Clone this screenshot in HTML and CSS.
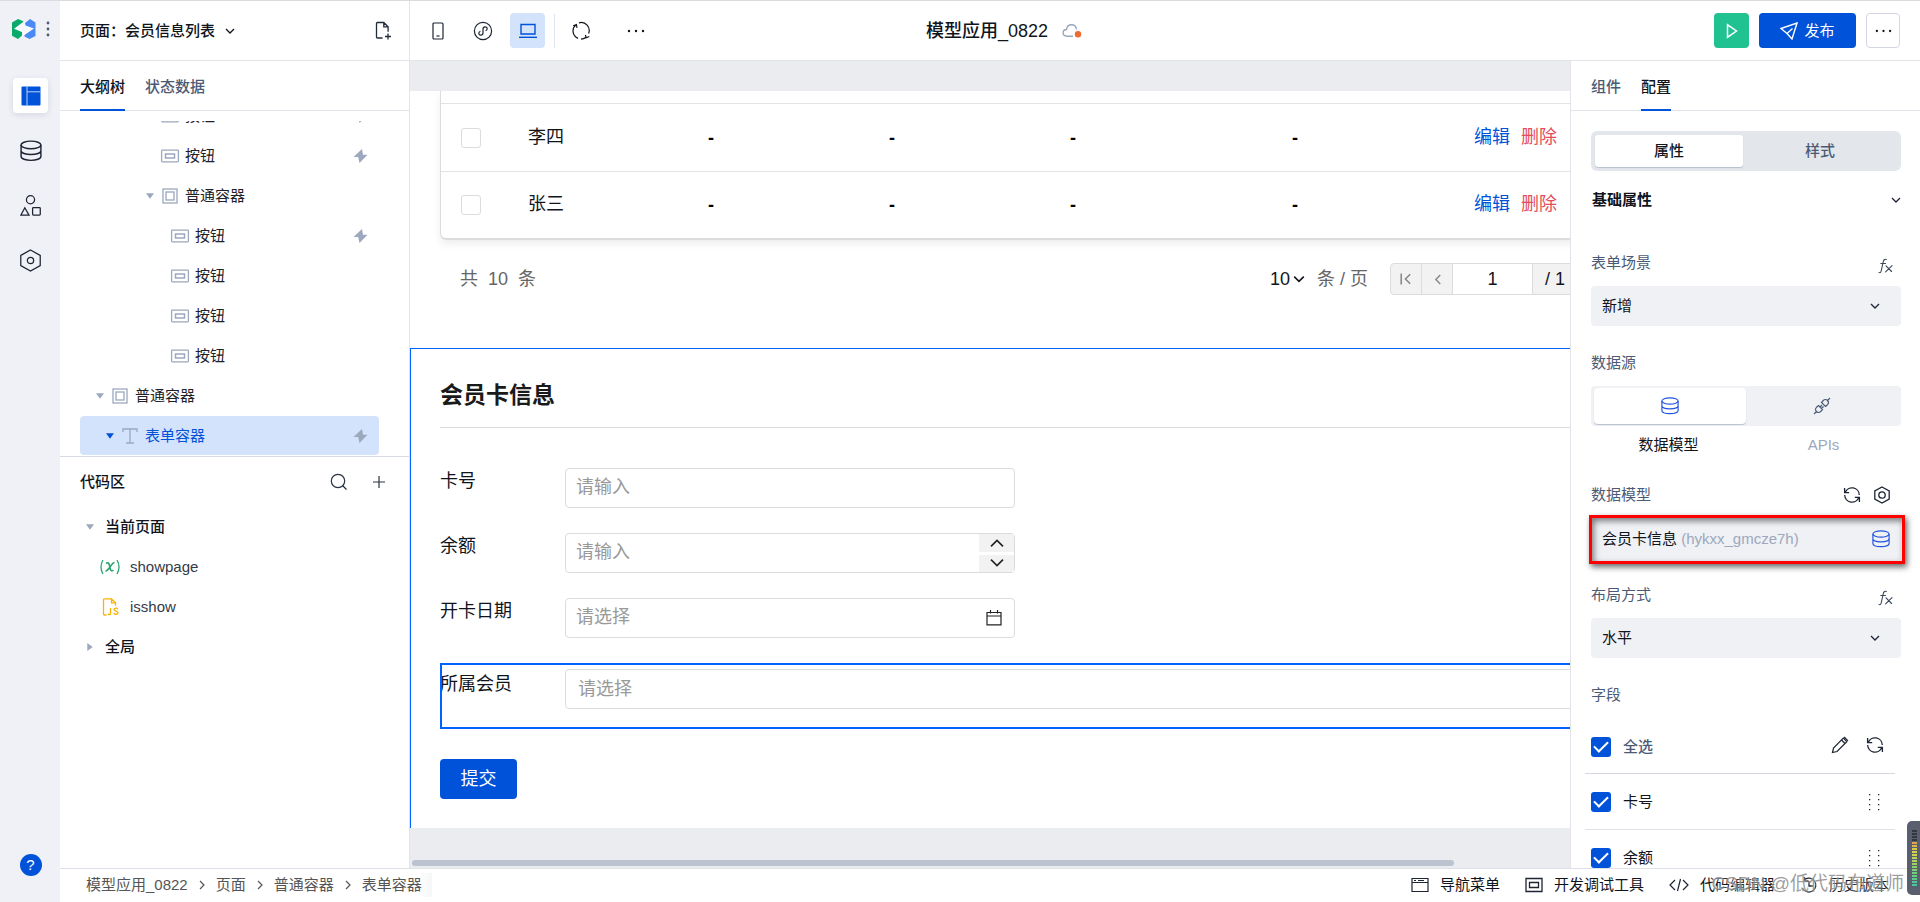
FILE: index.html
```html
<!DOCTYPE html>
<html lang="zh-CN">
<head>
<meta charset="utf-8">
<title>模型应用_0822</title>
<link rel="stylesheet" href="styles.css">
</head>
<body>
<svg class="sprite" aria-hidden="true">
  <symbol id="i-down" viewBox="0 0 10 10"><path d="M1 3l4 4 4-4" fill="none" stroke="currentColor" stroke-width="1.3"/></symbol>
  <symbol id="i-up" viewBox="0 0 10 10"><path d="M1 7l4-4 4 4" fill="none" stroke="currentColor" stroke-width="1.3"/></symbol>
  <symbol id="i-step-up" viewBox="0 0 12 12"><path d="M1.500 8.500L6 4l4.500 4.500" fill="none" stroke="currentColor" stroke-width="1.200"/></symbol>
  <symbol id="i-step-down" viewBox="0 0 12 12"><path d="M1.500 3.500L6 8l4.500-4.500" fill="none" stroke="currentColor" stroke-width="1.200"/></symbol>
  <symbol id="i-left" viewBox="0 0 10 10"><path d="M7.500 1l-4 4 4 4" fill="none" stroke="currentColor" stroke-width="1.300"/></symbol>
  <symbol id="i-right" viewBox="0 0 10 10"><path d="M3 1l4 4-4 4" fill="none" stroke="currentColor" stroke-width="1.200"/></symbol>
  <symbol id="i-first" viewBox="0 0 10 10"><path d="M1 0.500v9M8.500 1l-4 4 4 4" fill="none" stroke="currentColor" stroke-width="1.300"/></symbol>
  <symbol id="i-db" viewBox="0 0 20 20"><g fill="none" stroke="currentColor" stroke-width="1.300"><ellipse cx="10" cy="4.500" rx="9" ry="3.500"/><path d="M1 4.500v10.500c0 2 4 3.500 9 3.500s9-1.500 9-3.500V4.500M1 9.800c0 2 4 3.400 9 3.400s9-1.400 9-3.400"/></g></symbol>
  <symbol id="i-shapes" viewBox="0 0 20 20"><g fill="none" stroke="currentColor" stroke-width="1.200"><circle cx="10" cy="4.500" r="3.900"/><path d="M4.600 12.200l4 7H.800z"/><rect x="12" y="12" width="7.300" height="7.200" rx=".8"/></g></symbol>
  <symbol id="i-hex" viewBox="0 0 22 22"><g fill="none" stroke="currentColor" stroke-width="1.200"><path d="M11 1l9.300 5.200v9.600L11 21l-9.300-5.200V6.200z"/><circle cx="11" cy="11" r="3"/></g></symbol>
  <symbol id="i-nut" viewBox="0 0 18 18"><g fill="none" stroke="currentColor" stroke-width="1.300"><path d="M9 1l7.200 4v8L9 17l-7.200-4V5z"/><circle cx="9" cy="9" r="3.200"/></g></symbol>
  <symbol id="i-btn" viewBox="0 0 20 14"><g fill="none" stroke="currentColor"><rect x="1.600" y="1.100" width="16.800" height="11.800" rx=".8" stroke-width="1.300"/><rect x="5.500" y="5" width="9" height="4" stroke-width="1.500"/></g></symbol>
  <symbol id="i-box" viewBox="0 0 16 16"><g fill="none" stroke="currentColor" stroke-width="1.300"><rect x="1" y="1" width="14" height="14"/><rect x="4" y="4" width="8" height="8"/></g></symbol>
  <symbol id="i-t" viewBox="0 0 16 16"><path d="M1 4V1h14v3M8 1v14M4 15h8" fill="none" stroke="currentColor" stroke-width="1.300"/></symbol>
  <symbol id="i-bolt" viewBox="0 0 14 14"><path d="M8.500 0L0 8h4.700L6 14l8-8.300H9.500z" fill="currentColor"/></symbol>
  <symbol id="i-tri" viewBox="0 0 8 6"><path d="M0 .3h8L4 5.700z" fill="currentColor"/></symbol>
  <symbol id="i-trir" viewBox="0 0 6 8"><path d="M.3 0v8l5.400-4z" fill="currentColor"/></symbol>
  <symbol id="i-refresh" viewBox="0 0 18 18"><g fill="none" stroke="currentColor" stroke-width="1.300"><path d="M2.200 6.500A7.300 7.300 0 0 1 16.300 9M15.800 11.500A7.300 7.300 0 0 1 1.700 9M1.600 2v4.700h4.600M16.400 16v-4.700h-4.600"/></g></symbol>
  <symbol id="i-sync" viewBox="0 0 20 20"><g fill="none" stroke="currentColor" stroke-width="1.200"><path d="M5 3.800A8 8 0 0 0 7 17.400M8 1.800A8 8 0 0 1 17.600 12.500M15 16.200A8 8 0 0 1 10 18.100M2.200 4.700L5.400 3.500 6 6.800M14.300 14l1 2.800 3-1.300"/></g></symbol>
  <symbol id="i-more" viewBox="0 0 18 4"><g fill="currentColor"><circle cx="2" cy="2" r="1.200"/><circle cx="9" cy="2" r="1.200"/><circle cx="16" cy="2" r="1.200"/></g></symbol>
  <symbol id="i-fx" viewBox="0 0 16 16"><g fill="none" stroke="currentColor" stroke-width="1.100" stroke-linecap="round"><path d="M8.300 1.500C6.500.8 5.600 2 5.200 4L3.300 12.500C3 14.300 2.200 15 1 14.600M2.800 5.500h4.700M8 7.800l5.600 5.700M14 7.600l-6.400 6.200"/></g></symbol>
  <symbol id="i-grip" viewBox="0 0 12 18"><g fill="currentColor"><path d="M1 1h1.300v1.300H1zM1 6h1.300v1.300H1zM1 11h1.300v1.300H1zM1 16h1.300v1.300H1zM10 1h1.300v1.300H10zM10 6h1.300v1.300H10zM10 11h1.300v1.300H10zM10 16h1.300v1.300H10z"/></g></symbol>
</svg>

<nav class="rail" aria-label="主导航">
  <div class="brand">
    <svg width="24" height="20" viewBox="0 0 24 20"><path d="M0 3.500L6 0l5.300 2.200V6L4.500 9.500l5.500 2.500v4.500L6 20 0 16.800z" fill="#0aaa6c"/><path d="M18 0l5.500 3.500V17L17.500 20l-5-2.500V14l6-3.500-6-2.300V4.500z" fill="#4a8af4"/><path d="M12.500 2L2 9.800l9 3.700v3.500l11-7.500-8.500-3z" fill="#f7f9fc"/><path d="M11.300 2.200L4.500 7.500 2 9.500 0 9V3.500L6 0zM12.500 17.500l6.500-5 3.500-2.700 1 .2v7L17.500 20z" fill="none"/></svg>
    <svg width="4" height="16" viewBox="0 0 4 16"><g fill="#4b5b76"><circle cx="2" cy="2" r="1.400"/><circle cx="2" cy="8" r="1.400"/><circle cx="2" cy="14" r="1.400"/></g></svg>
  </div>
  <button class="rail-btn active" aria-label="页面"><svg width="20" height="20" viewBox="0 0 20 20"><rect x=".5" y=".5" width="19" height="19" rx="1" fill="#0052d9"/><path d="M6 .5v19M6 5.800h13.500" stroke="#b9d0f8" stroke-width="1"/></svg></button>
  <button class="rail-btn" aria-label="数据"><svg width="22" height="22"><use href="#i-db"/></svg></button>
  <button class="rail-btn" aria-label="组件"><svg width="21" height="21"><use href="#i-shapes"/></svg></button>
  <button class="rail-btn" aria-label="设置"><svg width="23" height="23"><use href="#i-hex"/></svg></button>
  <button class="help" aria-label="帮助">?</button>
</nav>

<div class="shell">
  <header class="header">
    <div class="header-left">
      <div class="page-pick">
        <button class="plain strong">页面：会员信息列表 <svg class="pick-arrow" width="10" height="10"><use href="#i-down"/></svg></button>
        <button class="plain" aria-label="新建页面"><svg width="18" height="20" viewBox="0 0 18 20"><g fill="none" stroke="#222b3a" stroke-width="1.300"><path d="M7.500 17H2.500a1 1 0 0 1-1-1V2.500a1 1 0 0 1 1-1h6.300l4.300 4.300v5M8.800 1.500v4.300h4.300M13 12.500v6M10 15.500h6"/></g></svg></button>
      </div>
      <div class="devices">
        <button class="tool" aria-label="手机"><svg width="14" height="18" viewBox="0 0 14 18"><rect x="2" y="1" width="10" height="16" rx="1" fill="none" stroke="#1d2433" stroke-width="1.200"/><path d="M5.500 14h3" stroke="#1d2433" stroke-width="1.200"/></svg></button>
        <button class="tool" aria-label="小程序"><svg width="20" height="20" viewBox="0 0 20 20"><g fill="none" stroke="#1d2433" stroke-width="1.200"><circle cx="10" cy="10" r="8.600"/><path d="M12.600 9.800c2.400-1 2-4-.4-4-1.400 0-2.200.9-2.200 2.200v4c0 1.300-.8 2.200-2.200 2.200-2.400 0-2.800-3-.4-4"/></g></svg></button>
        <button class="tool active" aria-label="电脑"><svg width="18" height="16" viewBox="0 0 18 16"><path d="M2 1.500h14v9.500H2z" fill="none" stroke="#0052d9" stroke-width="1.400"/><path d="M0 14.300h18" stroke="#0052d9" stroke-width="1.400"/></svg></button>
        <span class="tool-sep"></span>
        <button class="tool" aria-label="同步"><svg width="20" height="20"><use href="#i-sync"/></svg></button>
        <button class="tool more-tool" aria-label="更多"><svg width="18" height="4"><use href="#i-more"/></svg></button>
      </div>
    </div>
    <h1 class="app-title">模型应用_0822
      <svg width="20" height="16" viewBox="0 0 20 16"><path d="M11 13.300H5C-.5 13 .3 6.500 4.500 6.500 5.500 0 13.800.3 14.500 6.500" fill="none" stroke="#9aa6ba" stroke-width="1.400"/><circle cx="16" cy="11.300" r="3.200" fill="#ec6b2d"/></svg>
    </h1>
    <div class="header-right">
      <button class="run" aria-label="预览"><svg width="12" height="16" viewBox="0 0 12 16"><path d="M1.500 1.800v12.400l9-6.200z" fill="none" stroke="#fff" stroke-width="1.500"/></svg></button>
      <button class="publish"><svg width="18" height="18" viewBox="0 0 18 18"><path d="M1 6.500L17 1l-5 16-5-5.500zM7 11.500l5.500-5" fill="none" stroke="#fff" stroke-width="1.400"/></svg>发布</button>
      <button class="more" aria-label="更多"><svg width="17" height="4"><use href="#i-more"/></svg></button>
    </div>
  </header>

  <div class="middle">
    <aside class="outline">
      <div class="tabs"><button class="tab current">大纲树</button><button class="tab">状态数据</button></div>
      <div class="tree">
        <ul class="tree-list">
          <li class="node lv6"><span class="caret"></span><svg class="ico" width="20" height="14"><use href="#i-btn"/></svg>按钮<svg class="bolt" width="15" height="14"><use href="#i-bolt"/></svg></li>
          <li class="node lv6"><span class="caret"></span><svg class="ico" width="20" height="14"><use href="#i-btn"/></svg>按钮<svg class="bolt" width="15" height="14"><use href="#i-bolt"/></svg></li>
          <li class="node lv6"><span class="caret"><svg width="8" height="6"><use href="#i-tri"/></svg></span><svg class="ico" width="20" height="16"><use href="#i-box"/></svg>普通容器</li>
          <li class="node lv7"><span class="caret"></span><svg class="ico" width="20" height="14"><use href="#i-btn"/></svg>按钮<svg class="bolt" width="15" height="14"><use href="#i-bolt"/></svg></li>
          <li class="node lv7"><span class="caret"></span><svg class="ico" width="20" height="14"><use href="#i-btn"/></svg>按钮</li>
          <li class="node lv7"><span class="caret"></span><svg class="ico" width="20" height="14"><use href="#i-btn"/></svg>按钮</li>
          <li class="node lv7"><span class="caret"></span><svg class="ico" width="20" height="14"><use href="#i-btn"/></svg>按钮</li>
          <li class="node lv1"><span class="caret"><svg width="8" height="6"><use href="#i-tri"/></svg></span><svg class="ico" width="20" height="16"><use href="#i-box"/></svg>普通容器</li>
          <li class="node lv2 selected"><span class="caret"><svg width="8" height="6"><use href="#i-tri"/></svg></span><svg class="ico" width="20" height="16"><use href="#i-t"/></svg>表单容器<svg class="bolt" width="15" height="14"><use href="#i-bolt"/></svg></li>
        </ul>
      </div>
      <section class="code">
        <div class="code-head"><h2>代码区</h2>
          <button class="plain" aria-label="搜索"><svg width="18" height="18" viewBox="0 0 18 18"><g fill="none" stroke="#2a3242" stroke-width="1.200"><circle cx="8" cy="8" r="6.700"/><path d="M12.500 12.500l4 4"/></g></svg></button>
          <button class="plain" aria-label="新增"><svg width="12" height="12" viewBox="0 0 12 12"><path d="M6 0v12M0 6h12" stroke="#2a3242" stroke-width="1.200"/></svg></button>
        </div>
        <ul class="code-list">
          <li class="group"><span class="caret"><svg width="8" height="6"><use href="#i-tri"/></svg></span>当前页面</li>
          <li class="leaf"><svg width="20" height="16" viewBox="0 0 20 16"><g fill="none" stroke="#2ba471" stroke-width="1.300"><path d="M3 1c-2.500 4.300-2.500 9.700 0 14M17 1c2.500 4.300 2.500 9.700 0 14"/><path d="M6 4.500c2-1.500 3-.5 3.500 2l.8 3.500c.5 2 1.700 2.500 3.200 1M14.500 3.500c-3 0-5.500 8.500-9 8.500" stroke-width="1.600"/></g></svg>showpage</li>
          <li class="leaf"><svg width="20" height="18" viewBox="0 0 20 18"><g fill="none" stroke="#fbb200" stroke-width="1.300"><path d="M6.500 17H4.500a1 1 0 0 1-1-1V1.800a1 1 0 0 1 1-1h7l4 4v3M11.500.8v4h4M10.500 10v5.500c0 1.600-2.500 1.600-2.500 0M17.800 11.200c-.5-1.700-3.800-1.400-3.800.4 0 2 4 1 4 3.200 0 1.800-3.500 2-4.200.2"/></g></svg>isshow</li>
          <li class="group"><span class="caret"><svg width="6" height="8"><use href="#i-trir"/></svg></span>全局</li>
        </ul>
      </section>
    </aside>

    <main class="canvas">
      <div class="page">
        <div class="table-wrap">
          <table class="members">
            <colgroup><col class="c-check"><col class="c-text"><col class="c-text"><col class="c-text"><col class="c-wide"><col class="c-text"><col class="c-wide"></colgroup>
            <tbody>
              <tr><td><input type="checkbox" class="tick-empty" aria-label="选择李四"></td><td>李四</td><td class="dash">-</td><td class="dash">-</td><td class="dash">-</td><td class="dash">-</td><td><a href="#edit">编辑</a><a href="#del" class="danger">删除</a></td></tr>
              <tr><td><input type="checkbox" class="tick-empty" aria-label="选择张三"></td><td>张三</td><td class="dash">-</td><td class="dash">-</td><td class="dash">-</td><td class="dash">-</td><td><a href="#edit">编辑</a><a href="#del" class="danger">删除</a></td></tr>
            </tbody>
          </table>
        </div>
        <div class="pager">
          <span class="total"><span>共</span><span>10</span><span>条</span></span>
          <div class="size"><select aria-label="每页条数"><option>10</option></select><svg width="12" height="12"><use href="#i-down"/></svg></div>
          <span class="unit">条 / 页</span>
          <div class="jump">
            <button aria-label="首页"><svg width="12" height="12"><use href="#i-first"/></svg></button>
            <button aria-label="上一页"><svg width="11" height="11"><use href="#i-left"/></svg></button>
            <input type="text" value="1" aria-label="页码">
            <span>/ 1</span>
          </div>
        </div>
        <form class="card-form">
          <h2>会员卡信息</h2>
          <div class="row"><label for="f1">卡号</label><div class="control"><input id="f1" type="text" placeholder="请输入"></div></div>
          <div class="row"><label for="f2">余额</label><div class="control"><input id="f2" type="text" placeholder="请输入"><div class="stepper"><button type="button" aria-label="增加"><svg width="16" height="16"><use href="#i-step-up"/></svg></button><button type="button" aria-label="减少"><svg width="16" height="16"><use href="#i-step-down"/></svg></button></div></div></div>
          <div class="row"><label for="f3">开卡日期</label><div class="control"><input id="f3" type="text" placeholder="请选择"><svg class="cal" width="16" height="17" viewBox="0 0 16 17"><g fill="none" stroke="#222" stroke-width="1.200"><path d="M1 3.500h14v12.400H1zM1 7h14M4.500 1v3.500M11.500 1v3.500"/></g></svg></div></div>
          <div class="row picked"><label for="f4">所属会员</label><div class="control full"><input id="f4" type="text" placeholder="请选择"></div></div>
          <button type="button" class="submit">提交</button>
        </form>
      </div>
      <div class="scroll"><div class="thumb"></div></div>
    </main>

    <aside class="config">
      <div class="tabs"><button class="tab">组件</button><button class="tab current">配置</button></div>
      <div class="config-body">
        <div class="segment"><button class="on">属性</button><button>样式</button></div>
        <div class="section-head"><h2>基础属性</h2><svg width="10" height="10"><use href="#i-down"/></svg></div>
        <div class="field">
          <div class="field-head"><label for="s1">表单场景</label><svg width="16" height="16" class="fx"><use href="#i-fx"/></svg></div>
          <div class="select"><select id="s1"><option>新增</option></select><svg width="10" height="10"><use href="#i-down"/></svg></div>
        </div>
        <div class="field">
          <div class="field-head"><span>数据源</span></div>
          <div class="source"><button class="on" aria-label="数据模型"><svg width="18" height="18"><use href="#i-db"/></svg></button><button aria-label="APIs"><svg width="18" height="18" viewBox="0 0 18 18"><g fill="none" stroke="#4b5b76" stroke-width="1.200"><path d="M1 17l2.500-2.500M14.500 3.500L17 1M3.500 14.500c-1.500-1.500-1.200-3 0-4.200L5.500 8.500l4 4-1.800 2c-1.200 1.200-2.700 1.500-4.200 0zM14.500 3.500c1.500 1.500 1.200 3 0 4.200L12.500 9.500l-4-4 1.800-2c1.200-1.200 2.700-1.500 4.200 0zM7 10l2-2M8.500 11.500l2-2"/></g></svg></button></div>
          <div class="captions"><span>数据模型</span><span class="dim">APIs</span></div>
        </div>
        <div class="field">
          <div class="field-head"><span>数据模型</span><span class="acts head-acts"><button class="plain" aria-label="刷新"><svg width="18" height="18"><use href="#i-refresh"/></svg></button><button class="plain" aria-label="设置"><svg width="18" height="18"><use href="#i-nut"/></svg></button></span></div>
          <div class="marked"><button class="model"><span>会员卡信息 <span class="dim">(hykxx_gmcze7h)</span></span><svg width="18" height="18"><use href="#i-db"/></svg></button></div>
        </div>
        <div class="field">
          <div class="field-head"><label for="s2">布局方式</label><svg width="16" height="16" class="fx"><use href="#i-fx"/></svg></div>
          <div class="select"><select id="s2"><option>水平</option></select><svg width="10" height="10"><use href="#i-down"/></svg></div>
        </div>
        <div class="field">
          <div class="field-head"><span>字段</span></div>
          <ul class="checks">
            <li class="all"><label class="muted"><input type="checkbox" class="tick" checked>全选</label><span class="acts wide"><button class="plain" aria-label="编辑"><svg width="18" height="18" viewBox="0 0 18 18"><g fill="none" stroke="#1d2433" stroke-width="1.200"><path d="M1.500 16.500l1-4.500L12.300 2.200l3.500 3.500L6 15.500zM10.500 4l3.500 3.500M13.200 1l3.800 3.800"/></g></svg></button><button class="plain" aria-label="刷新"><svg width="18" height="18"><use href="#i-refresh"/></svg></button></span></li>
            <li><label><input type="checkbox" class="tick" checked>卡号</label><svg class="grip" width="12" height="18"><use href="#i-grip"/></svg></li>
            <li><label><input type="checkbox" class="tick" checked>余额</label><svg class="grip" width="12" height="18"><use href="#i-grip"/></svg></li>
          </ul>
        </div>
      </div>
    </aside>
  </div>

  <footer class="footer">
    <nav class="crumbs" aria-label="路径">
      <a href="#app">模型应用_0822</a><svg width="10" height="10"><use href="#i-right"/></svg><a href="#page">页面</a><svg width="10" height="10"><use href="#i-right"/></svg><a href="#box">普通容器</a><svg width="10" height="10"><use href="#i-right"/></svg><a href="#form" class="last">表单容器</a>
    </nav>
    <div class="foot-tools">
      <button><svg width="18" height="16" viewBox="0 0 18 16"><g fill="none" stroke="#1d2433" stroke-width="1.200"><path d="M1 1.500h16v13H1zM1 5.500h16M3 3.500h2M7 3.500h6"/></g></svg>导航菜单</button>
      <button><svg width="18" height="16" viewBox="0 0 18 16"><g fill="none" stroke="#1d2433" stroke-width="1.300"><path d="M1 1.500h16v13H1zM4.500 5.500h9v5h-9z"/></g></svg>开发调试工具</button>
      <button><svg width="20" height="14" viewBox="0 0 20 14"><path d="M6 2L1 7l5 5M14 2l5 5-5 5M11.500 1l-3 12" fill="none" stroke="#1d2433" stroke-width="1.200"/></svg>代码编辑器</button>
      <button><svg width="18" height="18" viewBox="0 0 18 18"><path d="M2.500 12A7 7 0 1 0 4 4M4.500 1v4h4M9 5v5h4" fill="none" stroke="#1d2433" stroke-width="1.300"/></svg>历史版本</button>
    </div>
  </footer>
</div>
<div class="watermark">CSDN @低代码布道师</div>
<div class="meter"><div class="bars"></div></div>
</body>
</html>
```
FILE: styles.css
```css
* { box-sizing: border-box; }
body {
  margin: 0;
  height: 100vh;
  display: flex;
  overflow: hidden;
  border-top: 1px solid #dadbde;
  background: #fff;
  color: #10141c;
  font: 15px/24px "Liberation Sans", "Noto Sans CJK SC", sans-serif;
}
button, input, select { font: inherit; color: inherit; margin: 0; }
button { border: 0; padding: 0; background: none; display: flex; align-items: center; justify-content: center; }
ul { list-style: none; margin: 0; padding: 0; }
h1, h2 { margin: 0; font-size: 15px; font-weight: 500; }
a { text-decoration: none; }
svg { flex: none; display: block; }
.sprite { position: absolute; width: 0; height: 0; }
.strong { font-weight: 500; }

/* left icon rail */
.rail { width: 60px; flex: none; background: #f0f1f6; display: flex; flex-direction: column; align-items: center; gap: 20px; padding: 18px 0 26px 1px; }
.brand { display: flex; align-items: center; gap: 10px; height: 20px; margin: 0 0 19px; }
.rail-btn { width: 35px; height: 35px; border-radius: 4px; color: #1d2433; }
.rail-btn.active { background: #fff; box-shadow: 0 2px 6px rgba(30, 45, 80, .12); }
.help { width: 22px; height: 22px; margin-top: auto; border-radius: 50%; background: #0052d9; color: #fff; }

.shell { flex: 1; min-width: 0; display: flex; flex-direction: column; }

/* top bar */
.header { flex: none; height: 60px; border-bottom: 1px solid #e3e4e9; display: grid; grid-template-columns: 1fr auto 1fr; align-items: center; }
.header-left { display: flex; height: 59px; }
.page-pick { width: 350px; border-right: 1px solid #e3e4e9; padding: 0 16px 0 20px; display: flex; align-items: center; justify-content: space-between; }
.page-pick button { gap: 10px; }
.devices { display: flex; align-items: center; padding-left: 10px; gap: 10px; }
.tool { width: 35px; height: 35px; border-radius: 4px; }
.tool.active { background: #d4e3fc; }
.tool-sep { width: 1px; height: 34px; margin: 0 -2px 0 -1px; background: #e3e4e9; }
.more-tool { margin-left: 10px; }
.app-title { font-size: 18px; display: flex; align-items: center; gap: 14px; padding-left: 28px; }
.header-right { display: flex; justify-content: flex-end; gap: 10px; padding-right: 20px; }
.run { width: 35px; height: 35px; border-radius: 4px; background: #21c292; }
.publish { width: 97px; height: 35px; border-radius: 4px; background: #0052d9; color: #fff; gap: 6px; }
.more { width: 34px; height: 35px; border: 1px solid #d3d7e3; border-radius: 4px; }

.middle { flex: 1; min-height: 0; display: flex; }
.tabs { display: flex; gap: 20px; height: 50px; flex: none; padding: 0 20px; border-bottom: 1px solid #e3e4e9; }
.tab { height: 50px; padding-top: 2px; color: #4b5b76; font-weight: 500; }
.tab.current { color: #10141c; border-bottom: 2px solid #0052d9; border-top: 2px solid transparent; }

/* outline tree */
.outline { width: 350px; flex: none; border-right: 1px solid #e3e4e9; display: flex; flex-direction: column; }
.tree { margin-top: 10px; overflow: hidden; border-bottom: 1px solid #d5dae3; flex: none; }
.tree-list { margin: -25px 30px 0 20px; }
.node { height: 39px; margin-bottom: 1px; display: flex; align-items: center; border-radius: 4px; padding-right: 11px; color: #1d2129; }
.node .ico { margin-right: 5px; color: #9ba8be; }
.lv1 { padding-left: 10px; }
.lv2 { padding-left: 20px; }
.lv6 { padding-left: 60px; }
.lv7 { padding-left: 70px; }
.caret { width: 20px; flex: none; display: flex; justify-content: center; color: #9ba8be; }
.bolt { margin-left: auto; color: #9ba8be; }
.node.selected { background: #d4e3fc; color: #0052d9; }
.selected .caret { color: #0052d9; }
.code-head { display: flex; align-items: center; height: 50px; padding: 0 24px 0 20px; gap: 25px; }
.code-head h2 { flex: 1; }
.group, .leaf { display: flex; align-items: center; height: 40px; }
.group { padding-left: 20px; gap: 5px; font-weight: 500; }
.leaf { padding-left: 40px; gap: 10px; color: #333a47; }

/* canvas */
.canvas { flex: 1; min-width: 0; background: #ebecf0; padding-top: 30px; display: flex; flex-direction: column; overflow: hidden; }
.page { flex: 1; min-height: 0; background: #fff; overflow: hidden; display: flex; flex-direction: column; font-size: 18px; }
.scroll { flex: none; height: 40px; padding: 32px 0 0 2px; }
.thumb { width: 90%; height: 6px; border-radius: 3px; background: #bac3cf; }
.table-wrap { flex: none; margin: 0 -60px 0 30px; padding-top: 12px; border: 1px solid #dcdcdc; border-top: 0; border-bottom: 2px solid #dcdcdc; border-radius: 0 0 6px 6px; box-shadow: 0 4px 8px rgba(0, 0, 0, .07); }
.members { border-collapse: separate; border-spacing: 0; table-layout: fixed; width: 100%; min-width: 1100px; }
.members td { height: 68px; border-top: 1px solid #e3e3e6; padding: 0 0 0 16px; }
.members td:first-child { padding-left: 20px; }
.members td:nth-child(n+2):not(.dash) { padding-bottom: 2px; }
.members tr:last-child td { height: 67px; }
.c-check { width: 71px; }
.c-text { width: 181px; }
.c-wide { width: 222px; }
.members a { color: #0052d9; margin-right: 11px; }
.members .danger { color: #e34d59; }
.members .dash { color: #000; font-weight: 700; padding-left: 15px; }
.tick-empty { appearance: none; display: block; width: 20px; height: 20px; border: 1px solid #dcdcdc; border-radius: 3px; background: #fff; }
.pager { flex: none; display: flex; align-items: center; height: 32px; margin: 23px -22px 0 50px; }
.total { display: flex; gap: 10px; margin-right: auto; color: #666; }
.size { display: flex; align-items: center; gap: 2px; margin-right: 12px; }
.size select { appearance: none; border: 0; background: none; padding: 0; }
.unit { color: #666; margin-right: 22px; }
.jump { display: flex; height: 32px; border: 1px solid #dcdcdc; border-radius: 4px; background: #f2f2f2; }
.jump button { width: 31px; border-right: 1px solid #dcdcdc; color: #888; }
.jump input { width: 80px; border: 0; border-right: 1px solid #dcdcdc; text-align: center; padding: 0; background: #fff; }
.jump span { width: 58px; padding-left: 12px; line-height: 30px; }

.card-form { flex: 1; margin-top: 53px; border: solid #0063ff; border-width: 1px 0 0 1px; padding: 28px 0 0 29px; }
.card-form h2 { font-size: 23px; line-height: 36px; font-weight: 700; padding-bottom: 14px; border-bottom: 1px solid #dcdcdc; margin-bottom: 40px; color: #1a1a1a; }
.row { display: flex; align-items: flex-start; margin-bottom: 25px; }
.row label { width: 125px; flex: none; line-height: 26px; }
.control { position: relative; width: 450px; }
.control input { width: 100%; height: 40px; border: 1px solid #dcdcdc; border-radius: 4px; padding: 0 10px 1px; background: #fff; display: block; }
.control input::placeholder { color: #999; opacity: 1; }
.stepper { position: absolute; right: 1px; top: 1px; bottom: 1px; width: 35px; display: flex; flex-direction: column; gap: 3px; }
.stepper button { flex: 1; background: #f2f2f2; color: #222; }
.cal { position: absolute; right: 13px; top: 11px; }
.picked { position: relative; padding: 6px 0 20px; margin-bottom: 30px; }
.picked::after { content: ""; position: absolute; inset: 0 -4px 0 0; border: 2px solid #0063ff; pointer-events: none; }
.picked label { padding-top: 2px; }
.full { flex: 1; margin-right: -6px; }
.full input { padding: 1px 12px 0; }
.submit { width: 77px; height: 40px; border-radius: 4px; background: #0052d9; color: #fff; }

/* config panel */
.config { width: 350px; flex: none; border-left: 1px solid #e3e4e9; display: flex; flex-direction: column; overflow: hidden; }
.config-body { padding: 20px 19px 0 20px; }
.config svg { color: #1d2433; }
.segment { display: flex; height: 40px; padding: 4px; border-radius: 6px; background: #e3e6eb; color: #4b5b76; }
.segment button { flex: 1; border-radius: 3px; font-weight: 500; }
.segment .on { flex: 0 0 49%; background: #fff; color: #10141c; box-shadow: 0 1px 1px #b6c0cf; }
.section-head { display: flex; align-items: center; justify-content: space-between; height: 58px; margin-bottom: 22px; padding-left: 1px; }
.section-head h2 { font-weight: 700; }
.field { margin-bottom: 25px; }
.field-head { display: flex; align-items: center; justify-content: space-between; height: 24px; margin-bottom: 11px; padding-right: 7px; color: #4b5b76; }
.config .fx { color: #3a4558; margin-top: 5px; }
.select { position: relative; display: flex; align-items: center; }
.select select { appearance: none; width: 100%; height: 40px; border: 0; border-radius: 4px; background: #f0f1f5; padding: 0 11px; }
.select svg { position: absolute; right: 21px; pointer-events: none; }
.source { display: flex; height: 40px; padding: 2px 3px; border-radius: 4px; background: #f0f1f5; }
.source button { flex: 1; border-radius: 4px; }
.source .on { background: #fff; box-shadow: 0 1px 1px #b6c0cf; }
.config .source .on svg, .config .model svg { color: #2354e0; }
.captions { display: flex; margin-top: 5px; line-height: 27px; text-align: center; }
.captions span { flex: 1; }
.dim { color: #9ba8be; }
.acts { display: flex; gap: 12px; }
.head-acts { padding-right: 3px; }
.acts.wide { gap: 17px; padding: 0 1px 3px 0; }
.marked { position: relative; }
.marked::after { content: ""; position: absolute; inset: -3px -4px -6px -2px; border: 3px solid #f00; box-shadow: 2px 3px 6px rgba(0, 0, 0, .6), inset 2px 3px 6px rgba(0, 0, 0, .5); pointer-events: none; }
.model { width: 100%; height: 40px; border-radius: 4px; background: #f0f1f5; padding: 1px 11px 0; justify-content: space-between; box-shadow: 0 3px 0 #f0f1f5; }
.checks { margin: 0 6px 0 -6px; }
.checks li { display: flex; align-items: center; justify-content: space-between; height: 56px; padding: 0 10px 0 6px; border-bottom: 1px solid #e0e2e9; }
.checks .all { padding-top: 2px; border-color: #d5d8e2; }
.checks label { display: flex; align-items: center; gap: 12px; }
.muted { color: #4b5b76; font-weight: 500; }
.grip { margin-right: 5px; }
.tick { appearance: none; width: 20px; height: 20px; border-radius: 3px; background: #0052d9; display: grid; place-items: center; }
.tick::after { content: ""; width: 12px; height: 6px; border: solid #fff; border-width: 0 0 2px 2px; transform: rotate(-45deg); margin-bottom: 4px; }

/* status bar */
.footer { flex: none; height: 34px; border-top: 1px solid #dfe1e8; display: flex; justify-content: space-between; align-items: center; padding: 0 31px 2px 26px; background: #fff; }
.crumbs { display: flex; align-items: center; gap: 9px; color: #555; }
.crumbs a { color: #555; }
.crumbs .last { padding-right: 10px; background: linear-gradient(to right, #fff 80%, #f5f6f8); }
.foot-tools { display: flex; gap: 25px; }
.foot-tools button { gap: 11px; }

.watermark { position: absolute; right: 16px; bottom: 6px; font-size: 19px; color: rgba(90, 90, 90, .6); text-shadow: 0 0 2px #fff; pointer-events: none; }
.meter { position: absolute; right: 0; bottom: 7px; width: 13px; height: 74px; padding: 9px 3px 8px 5px; border-radius: 5px 0 0 5px; background: #5a5f70; }
.bars { height: 57px; background: repeating-linear-gradient(to bottom, transparent 0 2px, #5a5f70 2px 3px), linear-gradient(to bottom, #34373f 0 20%, #e0a050 21%, #d8d84c 40%, #8ccf6a 65%, #3fc5a0 100%); }
```
